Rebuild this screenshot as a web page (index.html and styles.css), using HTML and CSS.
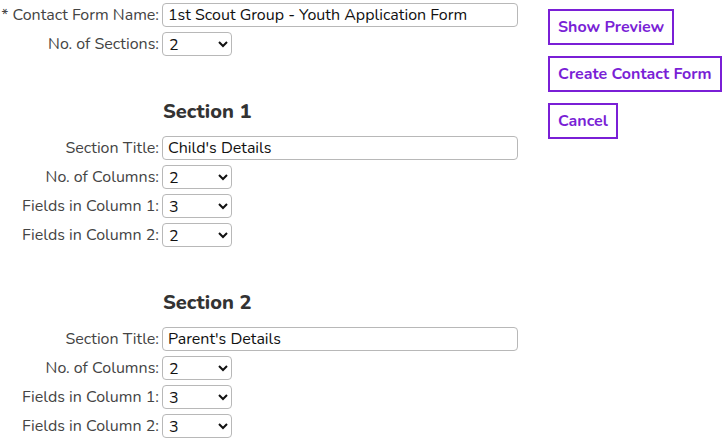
FILE: index.html
```html
<!DOCTYPE html>
<html>
<head>
<meta charset="utf-8">
<link rel="stylesheet" href="styles.css">
</head>
<body>
<div class="page">
  <form class="form">
    <div class="row"><label class="lbl">* Contact Form Name:</label><input class="txt" type="text" value="1st Scout Group - Youth Application Form"></div>
    <div class="row"><label class="lbl">No. of Sections:</label><select class="sel"><option>2</option></select></div>

    <h2 class="sec">Section 1</h2>
    <div class="row"><label class="lbl">Section Title:</label><input class="txt" type="text" value="Child's Details"></div>
    <div class="row"><label class="lbl">No. of Columns:</label><select class="sel"><option>2</option></select></div>
    <div class="row"><label class="lbl">Fields in Column 1:</label><select class="sel"><option>3</option></select></div>
    <div class="row"><label class="lbl">Fields in Column 2:</label><select class="sel"><option>2</option></select></div>

    <h2 class="sec">Section 2</h2>
    <div class="row"><label class="lbl">Section Title:</label><input class="txt" type="text" value="Parent's Details"></div>
    <div class="row"><label class="lbl">No. of Columns:</label><select class="sel"><option>2</option></select></div>
    <div class="row"><label class="lbl">Fields in Column 1:</label><select class="sel"><option>3</option></select></div>
    <div class="row"><label class="lbl">Fields in Column 2:</label><select class="sel"><option>3</option></select></div>
  </form>
  <div class="actions">
    <button class="btn" type="button">Show Preview</button>
    <button class="btn" type="button">Create Contact Form</button>
    <button class="btn" type="button">Cancel</button>
  </div>
</div>
</body>
</html>
```
FILE: styles.css
```css
html, body {
  margin: 0;
  padding: 0;
  background: #fff;
}
body {
  font-family: "Nunito", "Lato", "Open Sans", sans-serif;
  font-size: 16px;
  color: #444;
}
.page {
  display: flex;
  align-items: flex-start;
  padding-top: 3px;
}
.form {
  width: 518px;
  display: flex;
  flex-direction: column;
  gap: 5px;
}
.row {
  display: grid;
  grid-template-columns: 159px 1fr;
  column-gap: 3px;
  align-items: center;
  height: 24px;
}
.lbl {
  text-align: right;
  color: #444;
  white-space: nowrap;
}
.txt {
  box-sizing: border-box;
  width: 356px;
  height: 24px;
  border: 1px solid #b8b8b8;
  border-radius: 4px;
  padding: 0 5px;
  font: inherit;
  color: #111;
  background: #fff;
  outline: none;
}
.sel {
  box-sizing: border-box;
  width: 70px;
  height: 24px;
  border: 1px solid #b8b8b8;
  border-radius: 4px;
  padding: 0 2px;
  font: inherit;
  color: #111;
  background: #fff;
}
.sec {
  margin: 39px 0 7px 163px;
  font-size: 20px;
  font-weight: 800;
  color: #333;
  line-height: 24px;
}
.actions {
  display: flex;
  flex-direction: column;
  align-items: flex-start;
  gap: 11px;
  margin-left: 30px;
  padding-top: 6px;
}
.btn {
  box-sizing: border-box;
  height: 36px;
  padding: 0 8px;
  border: 2px solid #7a1fd6;
  background: #fff;
  color: #7a1fd6;
  font-family: inherit;
  font-size: 16px;
  font-weight: 700;
  cursor: pointer;
}
```
